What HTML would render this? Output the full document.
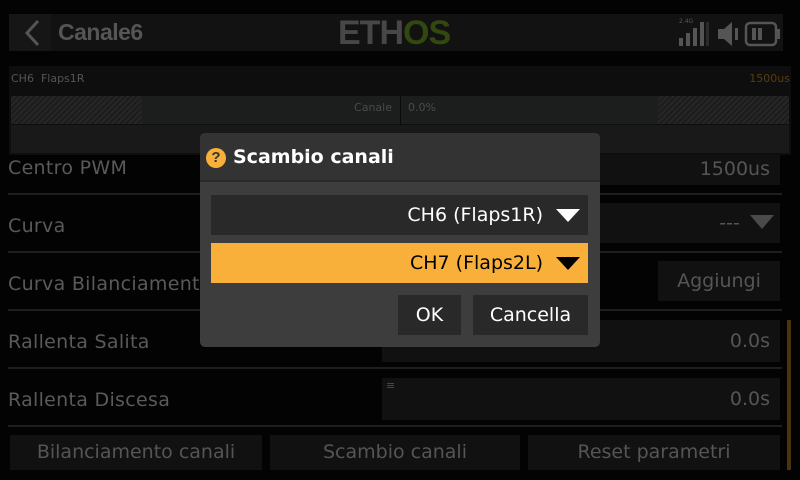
<!DOCTYPE html>
<html><head><style>
*{margin:0;padding:0;box-sizing:border-box}
body{width:800px;height:480px;background:#030303;position:relative;overflow:hidden;font-family:"DejaVu Sans","Liberation Sans",sans-serif;}
.a{position:absolute}
.lbl{position:absolute;left:8px;color:#5a5a5a;font-size:19px;letter-spacing:0.3px}
.sep{position:absolute;left:8px;width:774px;height:2px;background:#1e1e1e}
.box{position:absolute;background:#111;color:#555;font-size:19px;text-align:right;padding-right:10px}
.btn{position:absolute;top:435px;height:35px;background:#111;color:#555;font-size:19px;text-align:center;line-height:35px}
</style></head><body>
<!-- header -->
<div class="a" style="left:9px;top:14px;width:774px;height:37px;background:#121212"></div>
<div class="a" style="left:9px;top:14px;width:42px;height:37px;background:#161616"></div>
<svg class="a" style="left:22px;top:19px" width="20" height="28"><path d="M16 2 L5 14 L16 26" stroke="#555" stroke-width="3" fill="none"/></svg>
<div class="a" style="left:58px;top:19px;color:#555;font-size:23px;font-weight:bold;font-family:'Liberation Sans',sans-serif;letter-spacing:-0.5px">Canale6</div>
<div class="a" style="left:338px;top:14px;font-size:34px;font-weight:bold;font-family:'Liberation Sans',sans-serif;letter-spacing:-1px"><span style="color:#474747">ETH</span><span style="color:#33480f">OS</span></div>
<div class="a" style="left:679px;top:18px;color:#555;font-size:6px">2.4G</div>
<div class="a" style="left:679px;top:38px;width:4px;height:8px;background:#555"></div>
<div class="a" style="left:686px;top:33px;width:4px;height:13px;background:#555"></div>
<div class="a" style="left:693px;top:28px;width:4px;height:18px;background:#555"></div>
<div class="a" style="left:700px;top:22px;width:4px;height:24px;background:#555"></div>
<div class="a" style="left:706px;top:22px;width:3px;height:24px;background:#2a2a2a"></div>
<svg class="a" style="left:716px;top:20px" width="26" height="28"><path d="M2 9 H8 L16 2 V26 L8 19 H2 Z" fill="#555"/><rect x="19" y="8" width="3" height="12" fill="#555"/></svg>
<svg class="a" style="left:744px;top:20px" width="38" height="28"><rect x="2" y="3" width="30" height="22" rx="4" fill="none" stroke="#555" stroke-width="2.5"/><rect x="33" y="9" width="3" height="10" fill="#555"/><rect x="8" y="8" width="4" height="12" fill="#555"/><rect x="14" y="8" width="4" height="12" fill="#555"/></svg>
<!-- channel panel -->
<div class="a" style="left:9px;top:66px;width:782px;height:89px;background:#0e0e0e"></div>
<div class="a" style="left:11px;top:72px;color:#555;font-size:11px">CH6 &nbsp;Flaps1R</div>
<div class="a" style="right:10px;top:72px;color:#5a3c0e;font-size:11px">1500us</div>
<div class="a" style="left:11px;top:96px;width:778px;height:28px;background:#1c1e1d"></div>
<div class="a" style="left:11px;top:96px;width:131px;height:28px;background:repeating-linear-gradient(135deg,#1c1c1c 0 2px,#262626 2px 4px)"></div>
<div class="a" style="left:658px;top:96px;width:131px;height:28px;background:repeating-linear-gradient(135deg,#1c1c1c 0 2px,#262626 2px 4px)"></div>
<div class="a" style="left:400px;top:96px;width:1px;height:57px;background:#0a0a0a"></div>
<div class="a" style="left:300px;top:101px;width:92px;text-align:right;color:#4a4a4a;font-size:11px">Canale</div>
<div class="a" style="left:408px;top:101px;color:#4a4a4a;font-size:11px">0.0%</div>
<div class="a" style="left:11px;top:125px;width:778px;height:28px;background:#181918"></div>
<!-- rows -->
<div class="lbl" style="top:157px">Centro PWM</div>
<div class="box" style="left:382px;top:155px;width:398px;height:30px;line-height:28px">1500us</div>
<div class="sep" style="top:193px"></div>
<div class="lbl" style="top:215px">Curva</div>
<div class="box" style="left:382px;top:203px;width:398px;height:40px;line-height:40px">--- &nbsp;&nbsp;&nbsp;&nbsp;</div>
<svg class="a" style="left:750px;top:215px" width="24" height="14"><path d="M0 0 H24 L12 14Z" fill="#4a4a4a"/></svg>
<div class="sep" style="top:251px"></div>
<div class="lbl" style="top:273px">Curva Bilanciamento</div>
<div class="box" style="left:658px;top:261px;width:122px;height:40px;line-height:40px;text-align:center;padding:0">Aggiungi</div>
<div class="sep" style="top:309px"></div>
<div class="lbl" style="top:331px">Rallenta Salita</div>
<div class="box" style="left:382px;top:320px;width:398px;height:42px;line-height:42px">0.0s</div>
<div class="sep" style="top:367px"></div>
<div class="lbl" style="top:389px">Rallenta Discesa</div>
<div class="box" style="left:382px;top:378px;width:398px;height:42px;line-height:42px">0.0s</div>
<div class="a" style="left:386px;top:379px;color:#6a4a14;font-size:11px">≡</div>
<div class="sep" style="top:425px"></div>
<div class="btn" style="left:10px;width:252px">Bilanciamento canali</div>
<div class="btn" style="left:270px;width:250px">Scambio canali</div>
<div class="btn" style="left:528px;width:252px">Reset parametri</div>
<div class="a" style="left:787px;top:320px;width:4px;height:150px;background:#4a3410"></div>
<!-- dialog -->
<div class="a" style="left:200px;top:133px;width:400px;height:214px;background:#3d3d3d;border-radius:5px;overflow:hidden">
<div class="a" style="left:0;top:0;width:400px;height:49px;background:#333;border-bottom:2px solid #2a2a2a"></div>
<div class="a" style="left:6px;top:15px;width:20px;height:20px;border-radius:50%;background:#f8b03a;color:#333;font-size:15px;font-weight:bold;text-align:center;line-height:20px;font-family:'Liberation Sans',sans-serif">?</div>
<div class="a" style="left:33px;top:13px;color:#fff;font-size:19px;font-weight:bold">Scambio canali</div>
<div class="a" style="left:11px;top:62px;width:377px;height:40px;background:#292929;color:#fff;font-size:19px;text-align:right;padding-right:45px;line-height:40px">CH6 (Flaps1R)</div>
<svg class="a" style="left:356px;top:76px" width="24" height="13"><path d="M0 0 H24 L12 13Z" fill="#fff"/></svg>
<div class="a" style="left:11px;top:110px;width:377px;height:40px;background:#f8b03a;color:#000;font-size:19px;text-align:right;padding-right:45px;line-height:40px">CH7 (Flaps2L)</div>
<svg class="a" style="left:356px;top:124px" width="24" height="13"><path d="M0 0 H24 L12 13Z" fill="#000"/></svg>
<div class="a" style="left:198px;top:162px;width:63px;height:40px;background:#292929;color:#fff;font-size:19px;text-align:center;line-height:40px">OK</div>
<div class="a" style="left:273px;top:162px;width:115px;height:40px;background:#292929;color:#fff;font-size:19px;text-align:center;line-height:40px">Cancella</div>
</div>
</body></html>
